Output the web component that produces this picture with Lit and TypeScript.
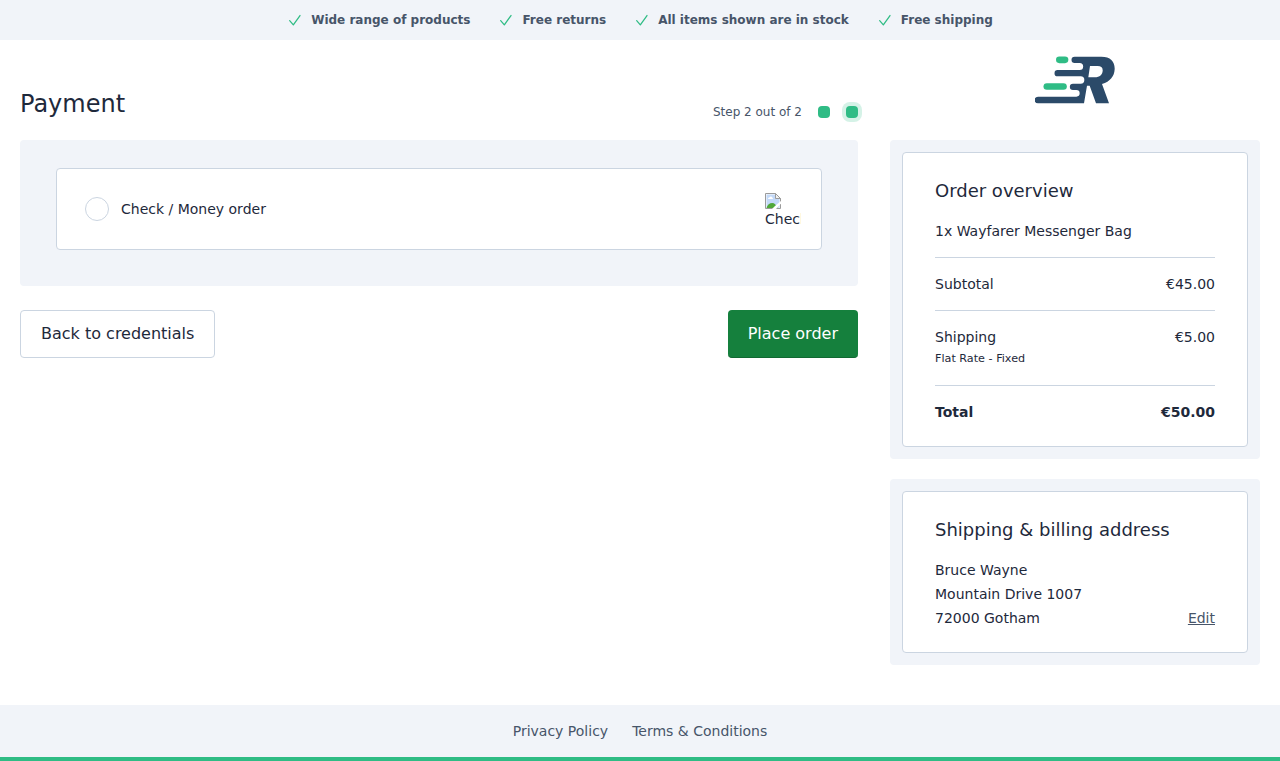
import { LitElement, html, css } from "lit";
import { customElement } from "lit/decorators.js";

const usps = ["Wide range of products", "Free returns", "All items shown are in stock", "Free shipping"];

@customElement("app-root")
export class AppRoot extends LitElement {
  static styles = css`
    :host { display: flex; flex-direction: column; min-height: 761px; background: #fff; color: #1e293b;
      font: 14px/24px "DejaVu Sans", sans-serif; }
    * { box-sizing: border-box; }
    h1, h2, p { margin: 0; font-weight: 400; }
    .usps { height: 40px; background: #f1f4f9; display: flex; align-items: center; justify-content: center; gap: 28px;
      font-size: 12px; line-height: 16px; font-weight: 700; color: #475569; }
    .usp { display: flex; align-items: center; gap: 8px; }
    .usp svg { width: 16px; height: 16px; fill: none; stroke: #2fbc85; stroke-width: 1.9; stroke-linecap: round; stroke-linejoin: round; }
    .columns { display: grid; grid-template-columns: 838px 370px; gap: 32px; padding: 0 20px; align-items: start; }
    .head { height: 100px; display: flex; justify-content: space-between; }
    h1 { font-size: 24px; line-height: 32px; padding-top: 48px; }
    .steps { display: flex; align-items: center; height: 16px; margin-top: 64px; font-size: 12px; line-height: 16px; color: #475569; }
    .step { width: 12px; height: 12px; border-radius: 4px; background: #2fbc85; margin-left: 16px; }
    .step.active { box-shadow: 0 0 0 4px #d5f2e7; }
    .panel { background: #f1f4f9; border-radius: 4px; }
    .methods { padding: 28px 36px 36px; }
    .method { height: 82px; border: 1px solid #cbd5e1; border-radius: 4px; background: #fff; display: flex; align-items: center;
      padding: 0 20px 0 28px; }
    .radio { width: 24px; height: 24px; border: 1px solid #cbd5e1; border-radius: 50%; margin-right: 12px; }
    .picture { margin-left: auto; width: 36px; height: 32px; overflow: hidden; white-space: nowrap; line-height: 16px; }
    .picture svg { display: block; width: 16px; height: 16px; margin-bottom: 2px; }
    .actions { display: flex; justify-content: space-between; margin-top: 24px; }
    button { height: 48px; padding: 0 20px; border-radius: 4px; font: 16px/24px "DejaVu Sans", sans-serif; color: #1e293b;
      background: #fff; border: 1px solid #cbd5e1; }
    .order { background: #15803d; color: #fff; border: 0; border-bottom: 1px solid #116932; }
    .logo { height: 100px; display: flex; justify-content: center; padding-top: 16px; }
    .logo svg { width: 80px; height: 48px; }
    .side { padding: 12px; margin-bottom: 20px; }
    .card { background: #fff; border: 1px solid #cbd5e1; border-radius: 4px; padding: 24px 32px 22px; }
    h2 { font-size: 18px; line-height: 28px; }
    .product { padding: 14px 0; }
    .row { display: flex; justify-content: space-between; border-top: 1px solid #cbd5e1; padding: 14px 0; }
    .rate { font-size: 11.2px; line-height: 16px; margin: 2px 0 4px; }
    .total { font-weight: 700; padding-bottom: 0; }
    .address { display: flex; justify-content: space-between; align-items: flex-end; padding-top: 14px; }
    a { color: #475569; }
    .shipcard { padding-bottom: 22px; }
    footer { margin-top: auto; height: 56px; border-bottom: 4px solid #2fbc85; background: #f1f4f9; display: flex;
      justify-content: center; align-items: center; gap: 24px; }
    footer a { text-decoration: none; }
  `;

  private row(label: string, price: string) {
    return html`<div class="row"><span>${label}</span><span>${price}</span></div>`;
  }

  render() {
    return html`
      <div class="usps">
        ${usps.map((t) => html`<div class="usp"><svg viewBox="0 0 24 24"><path d="M4 13l5.500 6.200L19.500 5.300" /></svg><span>${t}</span></div>`)}
      </div>
      <div class="columns">
        <main>
          <div class="head">
            <h1>Payment</h1>
            <div class="steps"><span>Step 2 out of 2</span><i class="step"></i><i class="step active"></i></div>
          </div>
          <div class="panel methods">
            <div class="method">
              <span class="radio"></span><span>Check / Money order</span>
              <div class="picture">
                <svg viewBox="0 0 16 16">
                  <path d="M.5.5H10.500L15.500 5.500V15.500H.5Z" fill="#fff" stroke="#9b9b9b" />
                  <path d="M1.500 1.500H10.500V5.500H14.500V14.800H1.500Z" fill="#c3d9f8" />
                  <path d="M3 6C3 4.500 4 4.500 4.500 4.500C5 3 7 3.500 7 4.500C8.200 4.500 8.200 6 7.500 6Z" fill="#fff" />
                  <path d="M1.500 15C2.500 11.500 4.500 10 7.200 10C9.500 10 11.500 12 12.500 15Z" fill="#50a83a" />
                  <path d="M7 16L10 13L16 8V10.500L11 16Z" fill="#fff" />
                  <path d="M10.500 .5V5.500H15.500Z" fill="#f2f2f2" stroke="#9b9b9b" />
                </svg>
                Check / Money order
              </div>
            </div>
          </div>
          <div class="actions"><button>Back to credentials</button><button class="order">Place order</button></div>
        </main>
        <aside>
          <div class="logo">
            <svg viewBox="31 33 240 144">
              <g fill="#2fbc85"><rect x="94" y="34.500" width="37" height="20" rx="10" /><rect x="56.500" y="114.500" width="70" height="20" rx="10" /></g>
              <path fill="#2b4a69" fill-rule="evenodd" d="M150 35H230C258 35 271 50 270 73C269 94 257 110 232 117L253 175H214L195 122H187L178 175H40A10 10 0 0 1 40 155H155A10 10 0 0 0 155 135H145A9.500 9.500 0 0 1 145 116H168A11 11 0 0 0 168 94H99A9.500 9.500 0 0 1 99 75H165A10.500 10.500 0 0 0 165 54H150A9.500 9.500 0 0 1 150 35ZM196 63L191 97H210C226 97 233 89 234 78C235 67 229 63 219 63Z" />
            </svg>
          </div>
          <div class="panel side">
            <div class="card">
              <h2>Order overview</h2>
              <p class="product">1x Wayfarer Messenger Bag</p>
              ${this.row("Subtotal", "€45.00")}
              <div class="row"><div>Shipping<div class="rate">Flat Rate - Fixed</div></div><span>€5.00</span></div>
              <div class="row total"><span>Total</span><span>€50.00</span></div>
            </div>
          </div>
          <div class="panel side">
            <div class="card shipcard">
              <h2>Shipping &amp; billing address</h2>
              <div class="address"><div>Bruce Wayne<br />Mountain Drive 1007<br />72000 Gotham</div><a href="#">Edit</a></div>
            </div>
          </div>
        </aside>
      </div>
      <footer><a href="#">Privacy Policy</a><a href="#">Terms &amp; Conditions</a></footer>
    `;
  }
}
